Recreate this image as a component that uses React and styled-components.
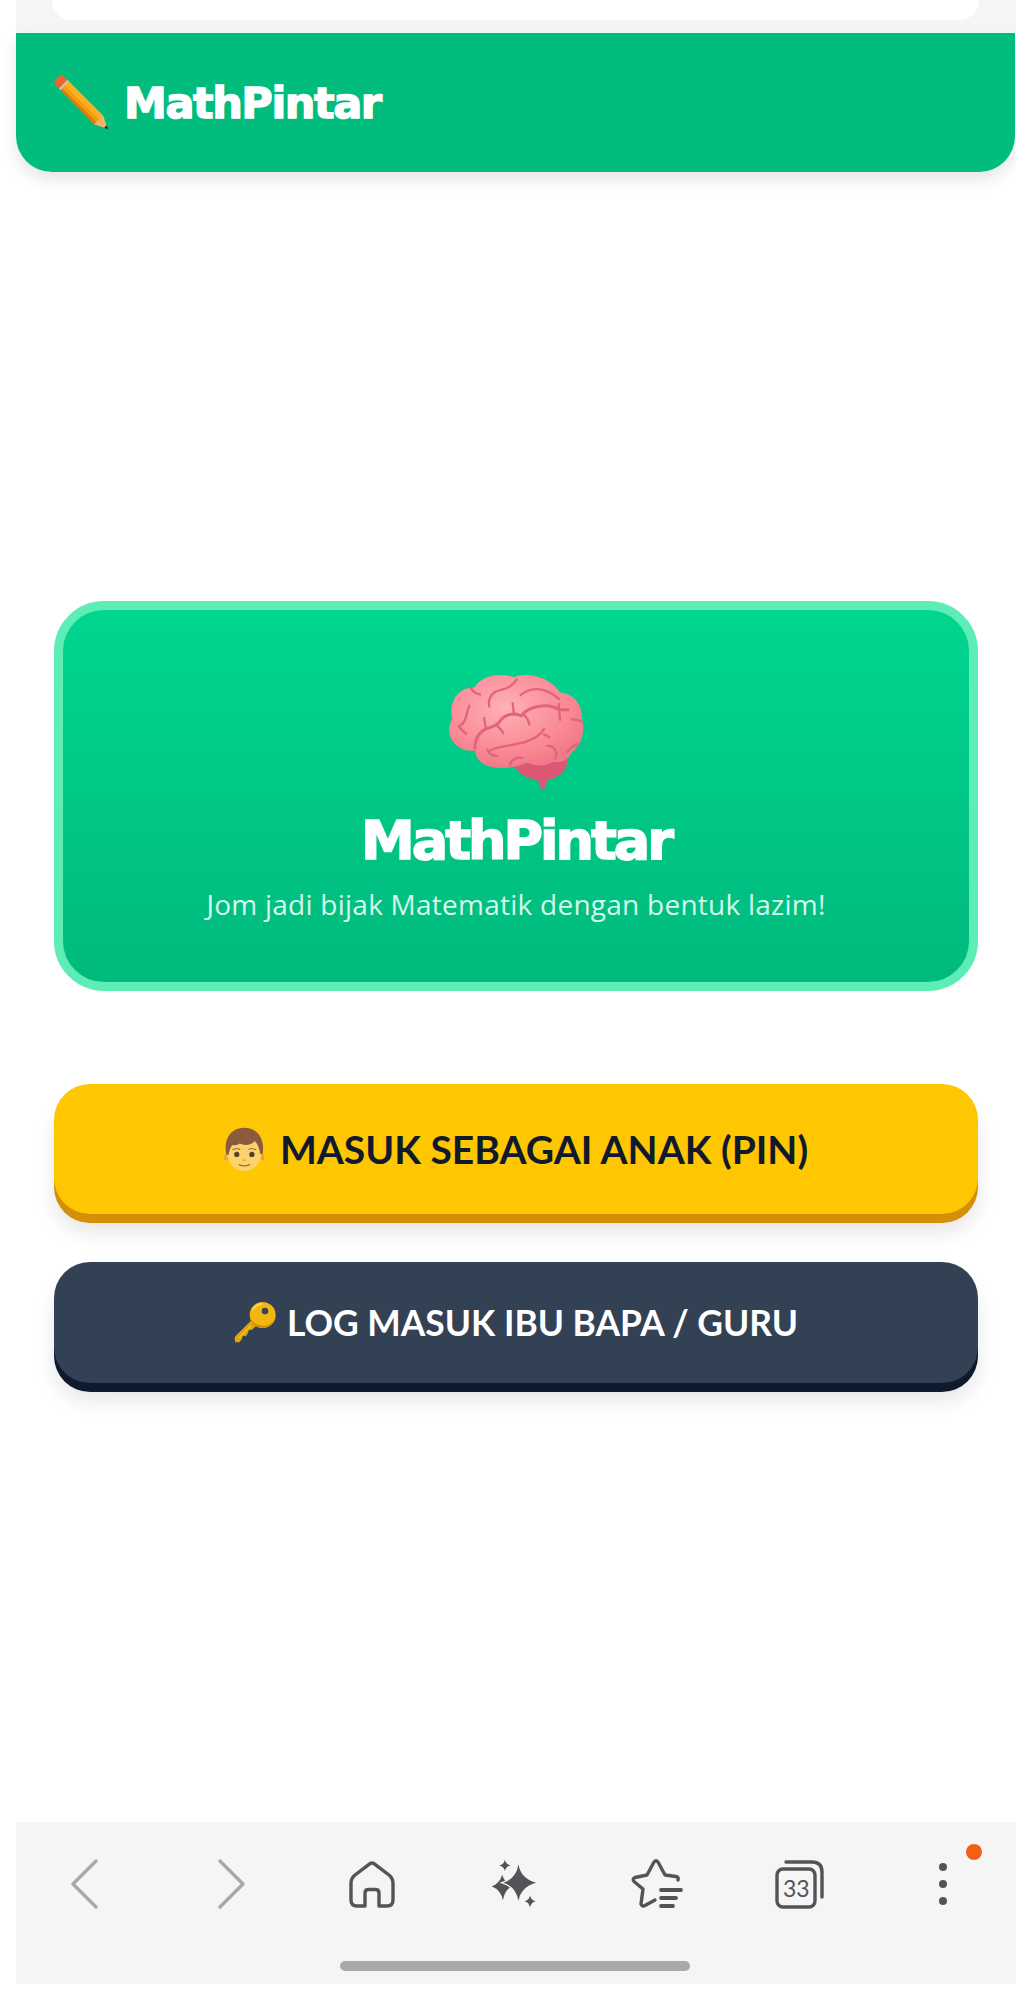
import React from 'react';
import styled, { createGlobalStyle } from 'styled-components';

const Global = createGlobalStyle`
  html, body { margin: 0; padding: 0; background: #fff; }
  body { font-family: "Lato", "Liberation Sans", sans-serif; font-variant-ligatures: none; }
`;

const Page = styled.div`
  width: 1016px;
  height: 2000px;
  display: flex;
  flex-direction: column;
  background: #fff;
  overflow: hidden;
`;

const TopStrip = styled.div`
  margin-left: 16px;
  height: 33px;
  flex: none;
  box-sizing: border-box;
  background: #f5f5f5;
  padding: 0 37px 0 36px;
`;

const PrevCard = styled.div`
  height: 20px;
  background: #fff;
  border-radius: 0 0 22px 22px;
`;

const Header = styled.header`
  margin-left: 16px;
  margin-right: 1px;
  height: 139px;
  flex: none;
  display: flex;
  align-items: center;
  gap: 15px;
  padding: 0 37px;
  background: #00bd7e;
  border-radius: 0 0 36px 36px;
  box-shadow: 0 -1px 0 #e4fff7, 0 8px 16px rgba(0, 0, 0, 0.1);
`;

const Brand = styled.span`
  font-family: "DejaVu Sans", sans-serif;
  font-size: 43px;
  font-weight: 700;
  color: #fff;
  letter-spacing: -1.4px;
  -webkit-text-stroke: 1.4px #fff;
`;

const Main = styled.main`
  padding: 429px 38px 0 54px;
  flex: 1;
`;

const Hero = styled.section`
  height: 390px;
  box-sizing: border-box;
  border: 9px solid #5eedb6;
  border-radius: 50px;
  background: linear-gradient(180deg, #00d68f, #00ba7d);
  display: flex;
  flex-direction: column;
  align-items: center;
  padding-top: 63px;
`;

const HeroTitle = styled.h1`
  margin: 18px 0 0;
  font-family: "DejaVu Sans", sans-serif;
  font-size: 54px;
  line-height: 66px;
  font-weight: 700;
  color: #fff;
  letter-spacing: -3px;
  -webkit-text-stroke: 1.6px #fff;
`;

const HeroText = styled.p`
  margin: 12px 0 0;
  font-family: "Open Sans", sans-serif;
  font-size: 28px;
  line-height: 36px;
  font-weight: 400;
  letter-spacing: 0.25px;
  color: #d6f8ea;
`;

const Actions = styled.div`
  margin-top: 93px;
  display: flex;
  flex-direction: column;
  gap: 39px;
`;

const Action = styled.button`
  height: ${({ $h }) => $h}px;
  width: 100%;
  padding: 0;
  margin-bottom: 9px;
  border: 0;
  border-radius: 36px;
  background: ${({ $bg }) => $bg};
  color: ${({ $fg }) => $fg};
  box-shadow: 0 9px 0 ${({ $edge }) => $edge}, 0 18px 20px rgba(0, 0, 0, 0.1);
  font-family: inherit;
  font-size: ${({ $fs }) => $fs}px;
  font-weight: 700;
  display: flex;
  align-items: center;
  justify-content: center;
  gap: ${({ $gap }) => $gap}px;
`;

const BottomBar = styled.nav`
  margin-left: 16px;
  margin-bottom: 16px;
  height: 162px;
  flex: none;
  box-sizing: border-box;
  padding: 38px 3px 0 0;
  background: #f5f5f5;
  position: relative;
  display: grid;
  grid-template-columns: repeat(7, 1fr);
  grid-template-rows: 48px;
  align-items: center;
`;

const NavItem = styled.div`
  display: flex;
  justify-content: center;
  color: ${({ $muted }) => ($muted ? '#a9a9a9' : '#545458')};
  margin-left: ${({ $shift }) => $shift || 0}px;
`;

const Dot = styled.span`
  position: absolute;
  top: 22px;
  right: 34px;
  width: 16px;
  height: 16px;
  border-radius: 50%;
  background: #f26016;
`;

const HomeHandle = styled.div`
  position: absolute;
  left: 324px;
  bottom: 13px;
  width: 350px;
  height: 10px;
  border-radius: 5px;
  background: #a9a9a9;
`;

const TabCount = styled.text`
  font-family: "Lato", sans-serif;
  font-size: 23px;
  font-weight: 400;
  fill: #545458;
`;

const Pencil = () => (
  <svg width="56" height="57" viewBox="40 44 168 170">
    <path d="M44 72 Q43 66 48 60 L58 50 Q64 45 70 49 L86 63 L60 90 Z" fill="#e8672c" />
    <path d="M58 87 L83 61 L90 68 L65 94 Z" fill="#c9c4bc" />
    <path d="M63 92 L88 66 L190 168 L204 208 L164 194 Z" fill="#f79a0c" />
    <path d="M88 66 L190 168 L178 180 L76 79 Z" fill="#ffb020" />
    <path d="M63 92 L68 87 L170 188 L164 194 Z" fill="#dc7a10" />
    <path d="M164 194 L190 168 L204 208 Z" fill="#f0b56c" />
    <path d="M194 205 L201 197 L205 210 Z" fill="#1d1d20" />
  </svg>
);

const Brain = () => (
  <svg width="135" height="117" viewBox="55 66 405 350">
    <defs>
      <radialGradient id="brainFill" cx="42%" cy="35%" r="65%">
        <stop offset="0%" stopColor="#ffb0b6" />
        <stop offset="70%" stopColor="#fa8a96" />
        <stop offset="100%" stopColor="#f27a8a" />
      </radialGradient>
    </defs>
    <path d="M250 340 C262 368 292 384 320 386 L332 412 Q338 418 344 410 L350 386 C380 382 408 364 412 326 Z" fill="#dc5774" />
    <path d="M65 205 C55 170 70 125 102 114 C112 110 124 110 132 108 C150 78 198 62 250 78 C290 62 356 76 388 124 C430 128 456 160 454 204 C464 240 452 284 420 308 C410 330 386 336 366 332 C340 350 304 342 288 334 C262 350 196 358 160 340 C142 328 134 314 134 298 C96 304 62 280 56 244 C54 228 58 214 65 205 Z" fill="url(#brainFill)" />
    <g fill="none" stroke="#e2647c" strokeWidth="7" strokeLinecap="round" strokeLinejoin="round">
      <path d="M120 110 C126 120 136 128 148 130" />
      <path d="M258 85 C240 116 214 112 194 122 C178 132 172 150 176 166" />
      <path d="M270 132 C298 108 340 104 386 144" />
      <path d="M116 164 C104 186 112 212 84 226 C92 236 98 240 106 248" />
      <path d="M132 292 C134 260 146 240 170 232 C184 228 196 224 205 214 C222 186 252 184 272 194 C290 170 346 150 386 176 L412 176" strokeWidth="9" />
      <path d="M160 200 L166 232 M246 156 L250 190 M280 190 C290 200 294 210 296 220 M200 224 C208 232 214 238 218 246 M384 158 L388 206" />
      <path d="M170 296 C172 306 186 314 198 314 M176 300 C200 282 250 286 290 270 C310 262 326 256 340 234 M340 250 L356 258" />
      <path d="M350 284 C372 284 382 300 374 322" />
      <path d="M238 342 C242 326 256 318 276 320" />
      <path d="M446 278 C430 282 418 290 410 302" />
      <path d="M424 204 L452 210" />
    </g>
  </svg>
);

const Boy = () => (
  <svg width="40" height="45" viewBox="28 20 122 136">
    <circle cx="34" cy="112" r="9" fill="#e7a63a" />
    <circle cx="146" cy="112" r="9" fill="#e7a63a" />
    <ellipse cx="90" cy="98" rx="53" ry="56" fill="#fbd26c" />
    <path d="M35 104 C26 60 46 22 90 22 C134 22 154 60 145 104 L138 100 C136 86 132 72 122 62 C112 74 92 78 76 70 C70 76 58 76 54 74 C48 80 44 92 42 104 Z" fill="#8c5b3e" />
    <circle cx="67" cy="103" r="8" fill="#5b3f2a" />
    <circle cx="113" cy="103" r="8" fill="#5b3f2a" />
    <path d="M55 88 Q66 82 76 87 M104 87 Q114 82 125 88" stroke="#8c5b3e" strokeWidth="3" fill="none" strokeLinecap="round" />
    <path d="M87 120 Q90 122 93 120" stroke="#dd9a48" strokeWidth="3.5" fill="none" strokeLinecap="round" />
    <path d="M74 134 Q90 142 106 134" stroke="#a06a30" strokeWidth="4" fill="none" strokeLinecap="round" />
  </svg>
);

const Key = () => (
  <svg width="42" height="41" viewBox="24 21 126 123">
    <path d="M74 78 L28 124 Q24 130 28 142 L40 142 L48 132 L50 122 L60 124 L66 114 L68 106 L78 104 L96 88 Z" fill="#e0a30a" />
    <circle cx="110" cy="60" r="39" fill="#f1b60f" />
    <path d="M71 62 A39 39 0 0 0 147 72 A42 42 0 0 1 71 62 Z" fill="#cf8f06" />
    <path d="M82 42 A34 34 0 0 1 106 27" stroke="#ffd65a" strokeWidth="6" fill="none" strokeLinecap="round" />
    <circle cx="117" cy="48" r="10" fill="#33445a" />
    <path d="M40 128 L74 92" stroke="#f7c62d" strokeWidth="4" strokeLinecap="round" />
  </svg>
);

const Chevron = ({ flip }) => (
  <svg width="27" height="50" viewBox="0 0 27 50" fill="none" stroke="currentColor" strokeWidth="3.4" strokeLinecap="round" strokeLinejoin="round">
    <path d={flip ? 'M2 2 L25 25 L2 48' : 'M25 2 L2 25 L25 48'} />
  </svg>
);

const Home = () => (
  <svg width="46" height="47" viewBox="0 0 46 47" fill="none" stroke="currentColor" strokeWidth="3.4" strokeLinejoin="round">
    <path d="M23 2 Q21.5 2 20 3.3 L6 14 Q2 17.5 2 22 L2 39 Q2 45 8 45 L16 45 L16 32 Q16 28.5 19.5 28.5 L26.5 28.5 Q30 28.5 30 32 L30 45 L38 45 Q44 45 44 39 L44 22 Q44 17.5 40 14 L26 3.3 Q24.5 2 23 2 Z" />
  </svg>
);

const Sparkles = () => (
  <svg width="47" height="50" viewBox="20 27 142 148" fill="currentColor">
    <path d="M54 72 Q57 92 84 108 Q62 118 56 150 Q50 120 22 108 Q46 100 54 72 Z" />
    <path d="M103 42 Q110 84 156 97 Q110 110 103 152 Q96 110 58 97 Q96 84 103 42 Z" stroke="#f5f5f5" strokeWidth="8" paintOrder="stroke" />
    <path d="M62 28 Q65 42 79 45 Q65 48 62 62 Q59 48 45 45 Q59 42 62 28 Z" />
    <path d="M138 136 Q141 150 155 153 Q141 156 138 172 Q135 156 121 153 Q135 150 138 136 Z" />
  </svg>
);

const StarList = () => (
  <svg width="52" height="50" viewBox="0 0 52 50" fill="none" stroke="currentColor" strokeWidth="3.4" strokeLinecap="round" strokeLinejoin="round">
    <path d="M47 21 Q48 18 45 17.5 L34 16 L27 3 Q25 0.5 23 3 L16 16 L4 18.5 Q1 20 3 22.5 L12 30 L10 45 Q11 48 14 46.5 L24 41" />
    <path d="M30 31 L50 31 M30 39 L45 39 M30 47 L42 47" strokeWidth="3.8" />
  </svg>
);

const Tabs = () => (
  <svg width="49" height="49" viewBox="0 0 49 49" fill="none" stroke="currentColor" strokeWidth="3.4" strokeLinecap="round">
    <path d="M11 2 L37 2 Q47 2 47 12 L47 37" />
    <rect x="2" y="9" width="38" height="38" rx="6" />
    <TabCount x="8" y="37" stroke="none">33</TabCount>
  </svg>
);

const Dots = () => (
  <svg width="8" height="42" viewBox="0 0 8 42" fill="currentColor">
    <circle cx="4" cy="4" r="4" />
    <circle cx="4" cy="21" r="4" />
    <circle cx="4" cy="38" r="4" />
  </svg>
);

export default function App() {
  return (
    <Page>
      <Global />
      <TopStrip>
        <PrevCard />
      </TopStrip>
      <Header>
        <Pencil />
        <Brand>MathPintar</Brand>
      </Header>
      <Main>
        <Hero>
          <Brain />
          <HeroTitle>MathPintar</HeroTitle>
          <HeroText>Jom jadi bijak Matematik dengan bentuk lazim!</HeroText>
        </Hero>
        <Actions>
          <Action $h={130} $bg="#fec702" $fg="#111a2c" $edge="#d38f07" $fs={39} $gap={16}>
            <Boy />
            MASUK SEBAGAI ANAK (PIN)
          </Action>
          <Action $h={121} $bg="#334155" $fg="#fff" $edge="#101a2e" $fs={35.4} $gap={11}>
            <Key />
            LOG MASUK IBU BAPA / GURU
          </Action>
        </Actions>
      </Main>
      <BottomBar>
        <NavItem $muted $shift={-6}><Chevron /></NavItem>
        <NavItem $muted $shift={3}><Chevron flip /></NavItem>
        <NavItem><Home /></NavItem>
        <NavItem><Sparkles /></NavItem>
        <NavItem><StarList /></NavItem>
        <NavItem><Tabs /></NavItem>
        <NavItem $shift={2}><Dots /></NavItem>
        <Dot />
        <HomeHandle />
      </BottomBar>
    </Page>
  );
}
